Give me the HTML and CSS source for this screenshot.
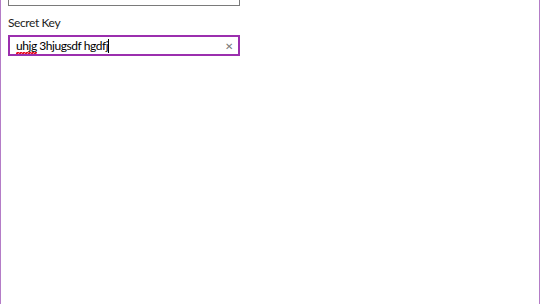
FILE: index.html
```html
<!DOCTYPE html>
<html lang="en">
<head>
    <meta charset="UTF-8">
    <title>Secret Key</title>
    <link rel="stylesheet" href="styles.css">
</head>
<body>
    <div class="window">
        <div class="form">
            <div class="field field-top"></div>

            <label class="label">Secret Key</label>
            <div class="field field-focus">
                <span class="value"><span class="misspelled">uhjg</span> 3hjugsdf hgdfj</span><span class="caret"></span>
                <span class="clear">&#x2715;</span>
            </div>
        </div>
    </div>
</body>
</html>
```

FILE: styles.css
```css
* { margin: 0; padding: 0; box-sizing: border-box; }

body {
    font-family: 'Segoe UI', Lato, 'Noto Sans', sans-serif;
    background: #ffffff;
    width: 540px;
    height: 304px;
    overflow: hidden;
}

.window {
    height: 304px;
    border-left: 1px solid #b47cc7;
    border-right: 1px solid #b47cc7;
    padding: 0 7px;
}

.form {
    width: 232px;
    display: flex;
    flex-direction: column;
}

.field {
    border: 2px solid #7a7a7a;
    height: 21px;
    display: flex;
    align-items: center;
    padding: 0 5px 0 6px;
}

.field-top {
    height: 7px;
    border-width: 0 1px 1px 1px;
    margin-top: -1px;
}

.label {
    font-size: 12px;
    letter-spacing: -0.4px;
    color: #222222;
    margin-top: 9px;
    height: 20px;
    line-height: 16px;
}

.field-focus {
    border: 2px solid #9b2fae;
    font-size: 12px;
    letter-spacing: -0.4px;
    color: #000000;
}

.value {
    letter-spacing: -0.45px;
}

.misspelled {
    position: relative;
}

.misspelled::after {
    content: '';
    position: absolute;
    left: 0;
    right: 0;
    bottom: -1px;
    height: 2px;
    background:
        linear-gradient(135deg, transparent 35%, #e81123 35%, #e81123 65%, transparent 65%) 0 0 / 3px 2px repeat-x,
        linear-gradient(45deg, transparent 35%, #e81123 35%, #e81123 65%, transparent 65%) 1.5px 0 / 3px 2px repeat-x;
}

.caret {
    width: 1px;
    height: 14px;
    background: #000000;
}

.clear {
    margin-left: auto;
    font-size: 10px;
    color: #777777;
}
```
